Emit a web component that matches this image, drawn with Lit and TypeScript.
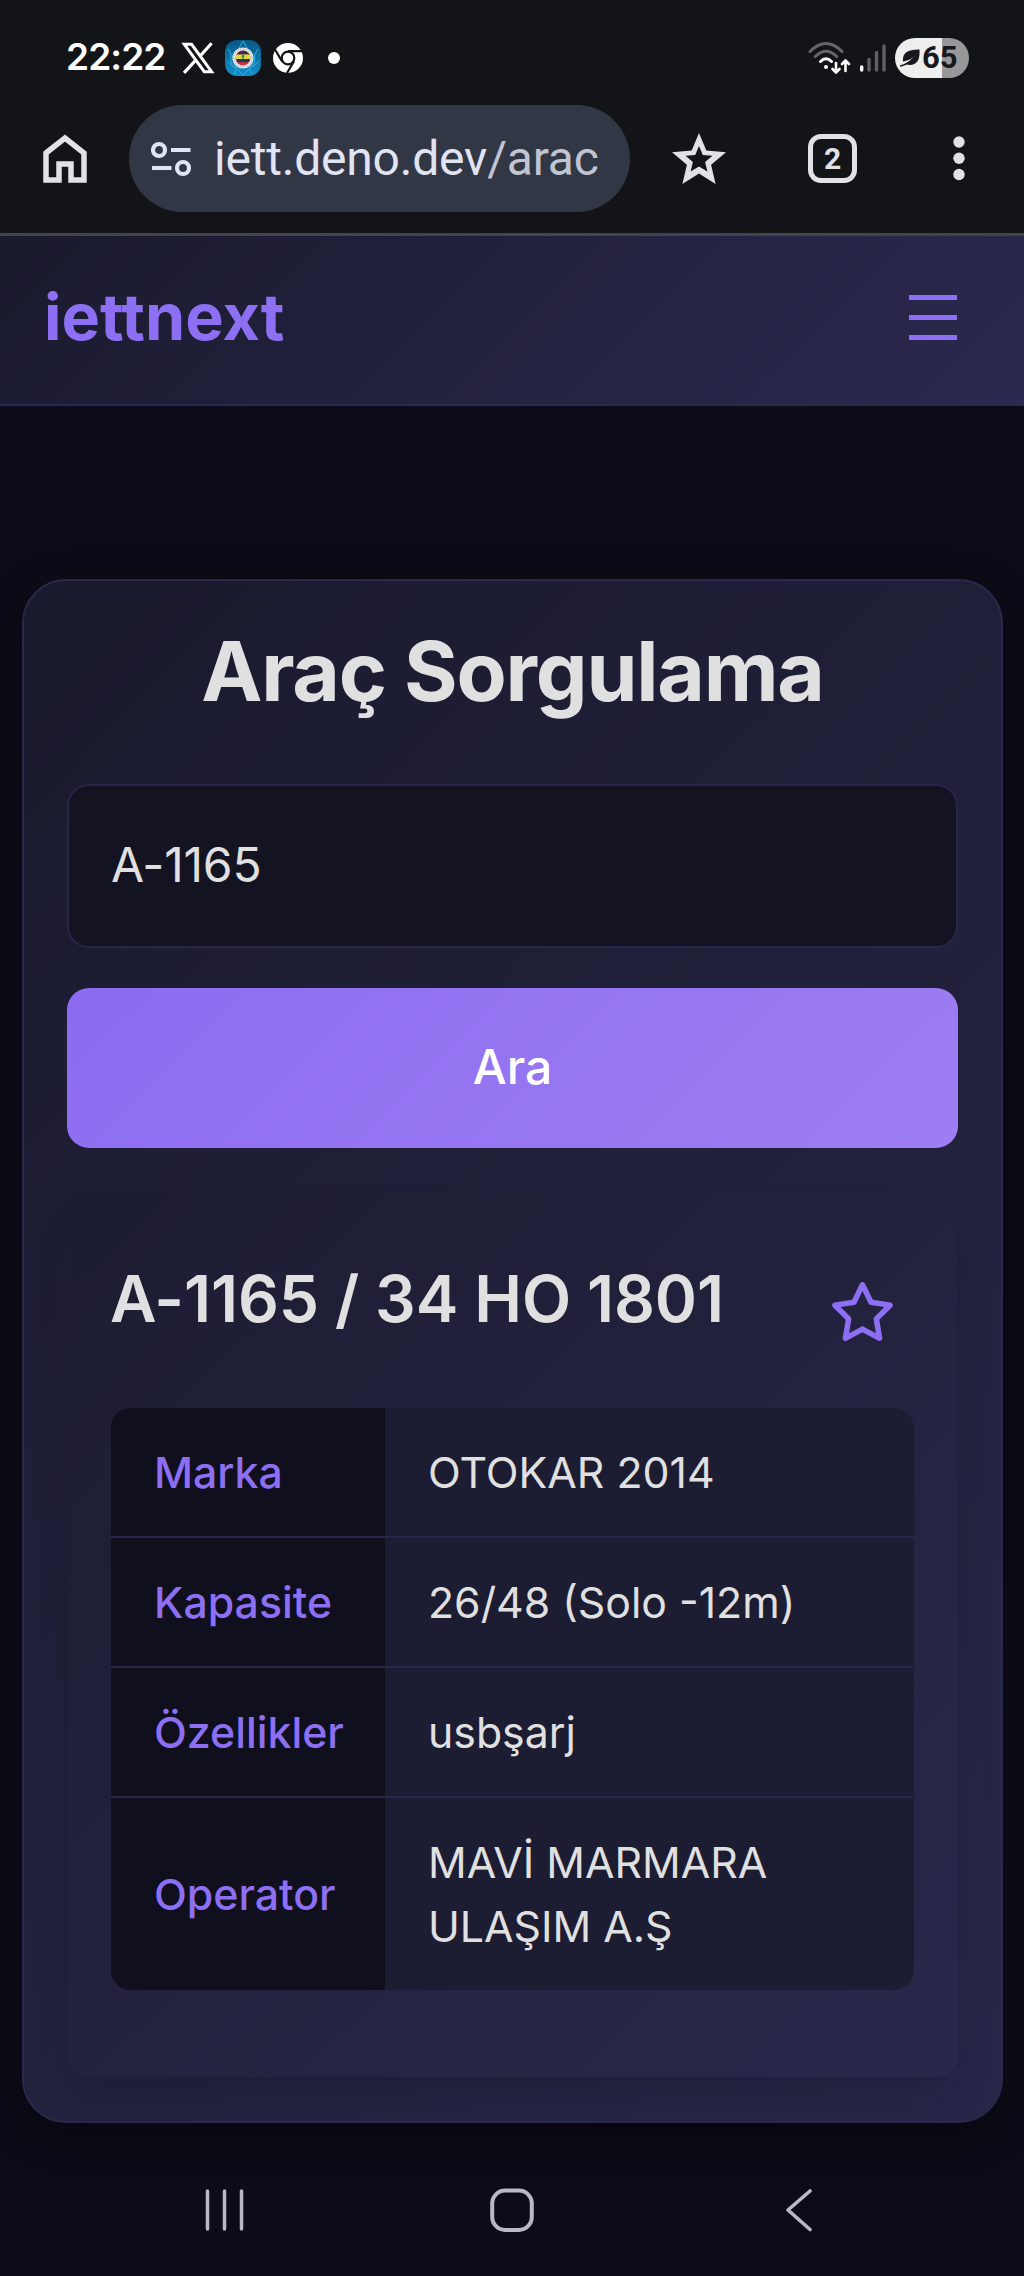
import { LitElement, html, css } from "lit";
import { customElement, state } from "lit/decorators.js";

const rows: [string, string[]][] = [
  ["Marka", ["OTOKAR 2014"]],
  ["Kapasite", ["26/48 (Solo -12m)"]],
  ["Özellikler", ["usbşarj"]],
  ["Operator", ["MAVİ MARMARA", "ULAŞIM A.Ş"]],
];

@customElement("status-bar")
class StatusBar extends LitElement {
  static styles = css`
    :host { display: block; background: #131418; }
    .bar { display: flex; align-items: center; height: 89px; padding: 26px 55px 0 66px; box-sizing: border-box; color: #fff; }
    .time { font: 600 37px/40px Inter, sans-serif; letter-spacing: -0.9px; width: 98px; white-space: nowrap; padding-bottom: 1px; }
    .x { margin-left: 17px; }
    .badge { margin-left: 10px; }
    .chrome { margin-left: 12px; }
    .dot { width: 12px; height: 12px; border-radius: 50%; background: #fff; margin-left: 40px; }
    .chrome + .dot { margin-left: 25px; }
    .wifi { margin-left: auto; }
    .signal { margin-left: 8px; }
    .battery { margin-left: 9px; width: 74px; height: 40px; border-radius: 20px; background: linear-gradient(90deg, #eeeeef 47px, #98989b 47px); display: flex; align-items: center; }
    .leaf { margin-left: 5px; }
    .level { font: 700 31px/40px Roboto, sans-serif; color: #18191c; margin-left: 2px; }
    svg { display: block; flex: none; }
  `;
  render() {
    return html`<div class="bar">
      <span class="time">22:22</span>
      <svg class="x" width="34" height="32" viewBox="0 0 34 32" fill="none" stroke="#fff">
        <path d="M3.3 2.3H10.6L30.6 29.7H23.3Z" stroke-width="3"/>
        <path d="M30.6 1.2L18.9 14.2M14.8 18.2L3 30.8" stroke-width="3.2"/>
      </svg>
      <svg class="badge" width="36" height="36" viewBox="0 0 36 36">
        <defs><linearGradient id="g" x1="0" y1="0" x2="0" y2="1"><stop offset="0" stop-color="#075784"/><stop offset="1" stop-color="#148fc9"/></linearGradient></defs>
        <rect width="36" height="36" rx="12" fill="url(#g)"/>
        <path d="M18 1L14 8M18 1L22 8M3 9Q7 13 6 19T13 30L18 35L23 30Q30 25 29.5 19T33 9M2 21Q7 27 12 28M34 21Q29 27 24 28M11 30L9 34M25 30L27 34" fill="none" stroke="#27b7e6" stroke-width="1"/>
        <circle cx="18" cy="18" r="10.6" fill="#e6e9ef"/>
        <circle cx="18" cy="18" r="9" fill="none" stroke="#9a9bb2" stroke-width="1" stroke-dasharray="1.5 1.5"/>
        <circle cx="18" cy="18" r="7.4" fill="#b83a3a"/>
        <path d="M11.5 14.5Q13.8 11 18 10.7Q22.2 11 24.5 14.500Z" fill="#3a2a55"/>
        <path d="M11.5 14.5H24.5Q26 17 25 19H11Q10 17 11.5 14.5Z" fill="#e2d83a"/>
        <path d="M11 19H25Q24.500 21 23.500 22H12.500Q11.500 21 11 19Z" fill="#20355e"/>
        <path d="M18 14L19.500 16L18 20L16.500 16Z" fill="#3b8b50"/>
      </svg>
      <svg class="chrome" width="30" height="30" viewBox="0 0 30 30">
        <circle cx="15" cy="15" r="15" fill="#fff"/>
        <circle cx="15" cy="15" r="6.3" fill="none" stroke="#131418" stroke-width="2.2"/>
        <path d="M15 8.200H29M9.100 18.400L2.100 6.800M20.900 18.400L14 30" stroke="#131418" stroke-width="2.2"/>
      </svg>
      <span class="dot"></span>
      <svg class="wifi" width="44" height="34" viewBox="0 0 44 34" fill="none" stroke-linecap="round" stroke-width="3">
        <path d="M2 10.5Q18 -5.500 34 10.5M7.300 15.5Q18 5 28.700 15.5" stroke="#65666a"/>
        <path d="M12.5 20.5Q18 15 23.5 20.5" stroke="#fff"/>
        <circle cx="18" cy="26" r="2" fill="#fff"/>
        <path d="M28 22V31M24.500 28L28 31.500L31.500 28M37.500 30V20M34 23L37.500 19.500L41 23" stroke="#fff" stroke-width="2.600" stroke-linejoin="round"/>
      </svg>
      <svg class="signal" width="26" height="28" viewBox="0 0 26 28" stroke-linecap="round" stroke-width="3.4">
        <path d="M1.700 23V26" stroke="#fff"/><path d="M9 15.500V26M16.500 8.500V26M24 2V26" stroke="#606165"/>
      </svg>
      <span class="battery">
        <svg class="leaf" width="20" height="18" viewBox="0 0 20 18">
          <path d="M19.500 .5Q20.500 16 10 16Q7.500 16 5.500 14.500Q11 13 14.500 7.500Q9.500 11.500 3 12.500Q1.500 0 19.500 .5Z" fill="#18191c"/>
          <path d="M0 17Q8 15.500 14 8.500" fill="none" stroke="#18191c" stroke-width="1.600"/>
        </svg>
        <span class="level">65</span>
      </span>
    </div>`;
  }
}

@customElement("browser-toolbar")
class BrowserToolbar extends LitElement {
  static styles = css`
    :host { display: block; background: #131418; }
    .bar { display: flex; align-items: center; height: 147px; padding: 0 59px 5px 43px; box-sizing: border-box; border-bottom: 3px solid #42454d; }
    svg { display: block; flex: none; }
    .pill { margin-left: 42px; width: 501px; height: 107px; border-radius: 54px; background: #323746; display: flex; align-items: center; padding-left: 22px; box-sizing: border-box; }
    .url { font: 400 48px/60px Roboto, sans-serif; color: #e1e4f2; white-space: nowrap; margin-left: 22px; letter-spacing: -0.2px; }
    .path { color: #c1c5d1; }
    .star { margin-left: 42px; }
    .tabs { margin-left: 82px; width: 49px; height: 49px; border: 5px solid #e1e2e7; border-radius: 13px; box-sizing: border-box; display: flex; align-items: center; justify-content: center; font: 700 30px/30px Roboto, sans-serif; color: #e1e2e7; }
    .dots { margin-left: auto; }
  `;
  render() {
    return html`<div class="bar">
      <svg width="44" height="50" viewBox="0 0 44 50"><path d="M3 19L22 4L41 19V46H28V30H16V46H3Z" fill="none" stroke="#e1e2e7" stroke-width="5.500"/></svg>
      <div class="pill">
        <svg width="41" height="36" viewBox="0 0 41 36" fill="none" stroke="#e1e4f2" stroke-width="4.200">
          <circle cx="8" cy="9" r="6"/><circle cx="32" cy="27" r="6"/><path d="M20 9H39.500M1 27H20.500"/>
        </svg>
        <span class="url">iett.deno.dev<span class="path">/arac</span></span>
      </div>
      <svg class="star" width="54" height="51" viewBox="0 0 54 51"><path fill-rule="evenodd" fill="#e1e2e7" d="M27 0L34.300 17.400L54 19.200L39.100 31.700L43.600 51L27 40.600L10.400 51L14.900 31.700L0 19.200L19.700 17.400ZM27 13L23.200 22L13.500 22.800L20.900 29L18.600 38.600L27 33.500L35.400 38.600L33.100 29L40.500 22.800L30.800 22Z"/></svg>
      <div class="tabs">2</div>
      <svg class="dots" width="12" height="45" viewBox="0 0 12 45" fill="#e1e2e7"><circle cx="6" cy="6" r="5.700"/><circle cx="6" cy="22.300" r="5.700"/><circle cx="6" cy="38.500" r="5.700"/></svg>
    </div>`;
  }
}

@customElement("site-header")
class SiteHeader extends LitElement {
  static styles = css`
    :host { display: block; }
    .bar { height: 170px; box-sizing: border-box; padding: 0 67px 6px 44px; border-bottom: 2px solid #2b294d; background: linear-gradient(135deg, #1a1a2e, #2b294f); display: flex; align-items: center; justify-content: space-between; }
    .logo { font: 700 64.600px/80px Inter, sans-serif; color: #8c6ff2; }
    .menu { display: grid; gap: 15px; width: 48px; }
    .line { height: 5px; background: #8c6ff2; }
  `;
  render() {
    return html`<div class="bar"><span class="logo">iettnext</span>
      <div class="menu"><span class="line"></span><span class="line"></span><span class="line"></span></div></div>`;
  }
}

@customElement("vehicle-card")
class VehicleCard extends LitElement {
  @state() query = "A-1165";
  static styles = css`
    :host { display: block; font-family: Inter, sans-serif; color: #e0e0e0; }
    * { box-sizing: border-box; }
    .card { height: 1544px; border: 2px solid #2b294b; border-radius: 44px; padding: 45px 43px 0; background: linear-gradient(135deg, #1a1a2e, #272648); box-shadow: 0 11px 44px rgba(0, 0, 0, 0.3); }
    .title { margin: 0; font-size: 82px; line-height: 92px; font-weight: 700; text-align: center; white-space: nowrap; letter-spacing: -1.200px; }
    .input { display: block; width: 100%; height: 164px; margin: 66px 0 40px; border: 2px solid #26254a; border-radius: 22px; background: #141322; padding: 0 42px 4px; font: 400 48px/60px Inter, sans-serif; color: #e0e0e0; outline: none; letter-spacing: -0.200px; }
    .button { display: block; width: 100%; height: 160px; border: 0; border-radius: 22px; background: linear-gradient(135deg, #8b6cf0, #9e7ef2); color: #fff; font: 500 48px/60px Inter, sans-serif; padding: 0 0 3px; }
    .result { margin-top: 44px; height: 885px; padding: 67px 44px 0 43px; border-radius: 22px; background: linear-gradient(135deg, #1c1c32, #29284b); box-shadow: 0 24px 44px -12px rgba(0, 0, 0, 0.17); }
    .head { display: flex; justify-content: space-between; align-items: center; height: 80px; padding-right: 21px; }
    .name { margin: 0; font-size: 64px; line-height: 80px; font-weight: 600; white-space: nowrap; letter-spacing: -0.100px; }
    .fav { display: block; margin-top: 24px; }
    .table { margin: 69px 0 0 1px; border-radius: 20px; overflow: hidden; background: #1c1c32; }
    .row { display: grid; grid-template-columns: 274px 1fr; border-bottom: 2px solid #26254a; }
    .row:last-child { border-bottom: 0; }
    .label { background: #100f1e; color: #8c6ff2; font-weight: 500; padding: 2px 0 0 43px; display: flex; align-items: center; font-size: 42.800px; line-height: 64px; }
    .value { padding: 33px 0 31px 43px; font-size: 42.800px; line-height: 64px; white-space: nowrap; }
    .line { display: block; }
  `;
  render() {
    return html`<section class="card">
      <h1 class="title">Araç Sorgulama</h1>
      <input class="input" .value=${this.query} />
      <button class="button">Ara</button>
      <div class="result">
        <div class="head"><h2 class="name">A-1165 / 34 HO 1801</h2>
          <svg class="fav" width="61" height="59" viewBox="24 0 528 512" fill="#8c6ff2"><path d="M287.9 0c9.200 0 17.600 5.200 21.600 13.500l68.600 141.300 153.200 22.600c9 1.300 16.500 7.600 19.300 16.300s.5 18.100-5.900 24.500L433.600 328.400l26.200 155.600c1.500 9-2.200 18.100-9.700 23.500s-17.300 6-25.300 1.700l-137-73.200L151 509.100c-8.100 4.300-17.900 3.700-25.300-1.700s-11.200-14.500-9.700-23.500l26.200-155.600L31.100 218.200c-6.500-6.400-8.700-15.900-5.900-24.500s10.300-14.900 19.300-16.300l153.200-22.600L266.300 13.500C270.400 5.200 278.700 0 287.900 0zm0 79L235.400 187.200c-3.500 7.100-10.200 12.100-18.100 13.300L99 217.900 184.900 303c5.500 5.500 8.100 13.300 6.800 21L171.400 443.700l105.200-56.200c7.100-3.800 15.600-3.800 22.600 0l105.200 56.200L384.200 324.100c-1.300-7.700 1.200-15.500 6.800-21l85.900-85.100L358.600 200.500c-7.800-1.200-14.600-6.100-18.100-13.300L287.900 79z"/></svg>
        </div>
        <div class="table">${rows.map(([k, v]) => html`<div class="row"><div class="label">${k}</div><div class="value">${v.map((l) => html`<span class="line">${l}</span>`)}</div></div>`)}</div>
      </div>
    </section>`;
  }
}

@customElement("system-nav")
class SystemNav extends LitElement {
  static styles = css`
    :host { display: block; }
    .bar { display: flex; padding-left: 205px; }
    .icon { display: block; fill: none; stroke: #b9b8c4; stroke-linecap: round; stroke-linejoin: round; }
    .recents { stroke-width: 3.500px; }
    .home { stroke-width: 4px; margin-left: 245px; }
    .back { stroke-width: 3.600px; margin-left: 251px; }
  `;
  render() {
    return html`<div class="bar">
      <svg class="icon recents" width="40" height="44" viewBox="0 0 40 44"><path d="M2.500 3V41M19.500 3V41M36.500 3V41"/></svg>
      <svg class="icon home" width="44" height="44" viewBox="0 0 44 44"><rect x="2.200" y="2.500" width="39.600" height="39.500" rx="13"/></svg>
      <svg class="icon back" width="28" height="44" viewBox="0 0 28 44"><path d="M25 3L3 22L25 41.500"/></svg>
    </div>`;
  }
}

@customElement("app-root")
class AppRoot extends LitElement {
  static styles = css`
    :host { display: block; height: 2276px; overflow: hidden; background: #0c0b17; }
    .content { padding: 173px 21px 65px 22px; }
  `;
  render() {
    return html`<status-bar></status-bar><browser-toolbar></browser-toolbar><site-header></site-header>
      <main class="content"><vehicle-card></vehicle-card></main><system-nav></system-nav>`;
  }
}
